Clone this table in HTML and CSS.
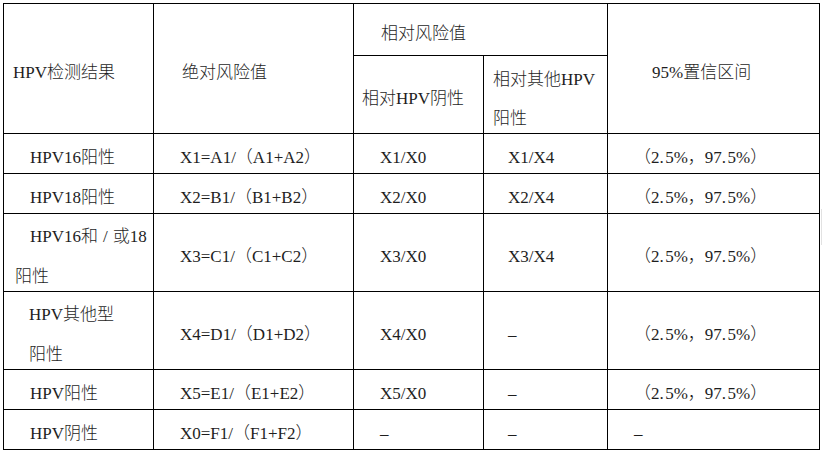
FILE: index.html
```html
<!DOCTYPE html>
<html lang="zh-CN">
<head>
<meta charset="utf-8">
<title>HPV风险值表</title>
<link rel="stylesheet" href="styles.css">
</head>
<body>
<div class="wrap">
<div class="grid">
  <div class="cell hd span-r2 pl9"><div class="t">HPV检测结果</div></div>
  <div class="cell hd span-r2 pl28"><div class="t">绝对风险值</div></div>
  <div class="cell hd c34 pl27"><div class="t">相对风险值</div></div>
  <div class="cell hd span-r2 pl44"><div class="t">95%置信区间</div></div>
  <div class="cell hd pl8"><div class="t">相对HPV阴性</div></div>
  <div class="cell hd pl9 two"><div class="t">相对其他HPV<br>阳性</div></div>

  <div class="cell pl26"><div class="t">HPV16阳性</div></div>
  <div class="cell pl26"><div class="t">X1=A1/（A1+A2）</div></div>
  <div class="cell pl26"><div class="t">X1/X0</div></div>
  <div class="cell pl24"><div class="t">X1/X4</div></div>
  <div class="cell pl26"><div class="t">（2.&#8202;5%，97.&#8202;5%）</div></div>

  <div class="cell pl26"><div class="t">HPV18阳性</div></div>
  <div class="cell pl26"><div class="t">X2=B1/（B1+B2）</div></div>
  <div class="cell pl26"><div class="t">X2/X0</div></div>
  <div class="cell pl24"><div class="t">X2/X4</div></div>
  <div class="cell pl26"><div class="t">（2.&#8202;5%，97.&#8202;5%）</div></div>

  <div class="cell pl11 two"><div class="t indent">HPV16和<span class="sl">/</span>或18<br>阳性</div></div>
  <div class="cell pl26"><div class="t">X3=C1/（C1+C2）</div></div>
  <div class="cell pl26"><div class="t">X3/X0</div></div>
  <div class="cell pl24"><div class="t">X3/X4</div></div>
  <div class="cell pl26"><div class="t">（2.&#8202;5%，97.&#8202;5%）</div></div>

  <div class="cell pl25 two"><div class="t">HPV其他型<br>阳性</div></div>
  <div class="cell pl26"><div class="t">X4=D1/（D1+D2）</div></div>
  <div class="cell pl26"><div class="t">X4/X0</div></div>
  <div class="cell pl24"><div class="t">–</div></div>
  <div class="cell pl26"><div class="t">（2.&#8202;5%，97.&#8202;5%）</div></div>

  <div class="cell pl26"><div class="t">HPV阳性</div></div>
  <div class="cell pl26"><div class="t">X5=E1/（E1+E2）</div></div>
  <div class="cell pl26"><div class="t">X5/X0</div></div>
  <div class="cell pl24"><div class="t">–</div></div>
  <div class="cell pl26"><div class="t">（2.&#8202;5%，97.&#8202;5%）</div></div>

  <div class="cell pl26"><div class="t">HPV阴性</div></div>
  <div class="cell pl26"><div class="t">X0=F1/（F1+F2）</div></div>
  <div class="cell pl26"><div class="t">–</div></div>
  <div class="cell pl24"><div class="t">–</div></div>
  <div class="cell pl26"><div class="t">–</div></div>
</div>
<div class="handle"></div>
</div>
</body>
</html>
```
FILE: styles.css
```css
html, body {
  margin: 0;
  background: #ffffff;
}
body {
  padding: 3px;
  font-family: "Liberation Serif", "Noto Sans CJK SC", serif;
  font-size: 17px;
  font-weight: 300;
  color: #1e1e1e;
}
.wrap {
  position: relative;
  width: 817px;
}
.grid {
  display: grid;
  grid-template-columns: 150px 200px 130px 124px 212px;
  grid-template-rows: 52px 78px 40px 40px 78px 78px 40px 40px;
  border-top: 1px solid #000;
  border-left: 1px solid #000;
  width: 816px;
}
.cell {
  box-sizing: border-box;
  border-right: 1px solid #000;
  border-bottom: 1px solid #000;
  display: flex;
  align-items: center;
  padding-top: 8px;
  line-height: 30px;
  white-space: nowrap;
}
.cell.two {
  line-height: 40px;
}
.cell.hd.two {
  line-height: 39px;
}
.t.indent {
  text-indent: 15px;
}
.sl {
  margin: 0 5px;
}
.span-r2 { grid-row: span 2; }
.c34 { grid-column: span 2; }
.pl8 { padding-left: 8px; }
.pl9 { padding-left: 9px; }
.pl11 { padding-left: 11px; }
.pl24 { padding-left: 24px; }
.pl25 { padding-left: 25px; }
.pl26 { padding-left: 26px; }
.pl27 { padding-left: 27px; }
.pl28 { padding-left: 28px; }
.pl44 { padding-left: 44px; }
.handle {
  position: absolute;
  left: 818px;
  top: 206px;
  width: 2px;
  height: 36px;
  border-left: 1px solid #e2e2e2;
}
```
